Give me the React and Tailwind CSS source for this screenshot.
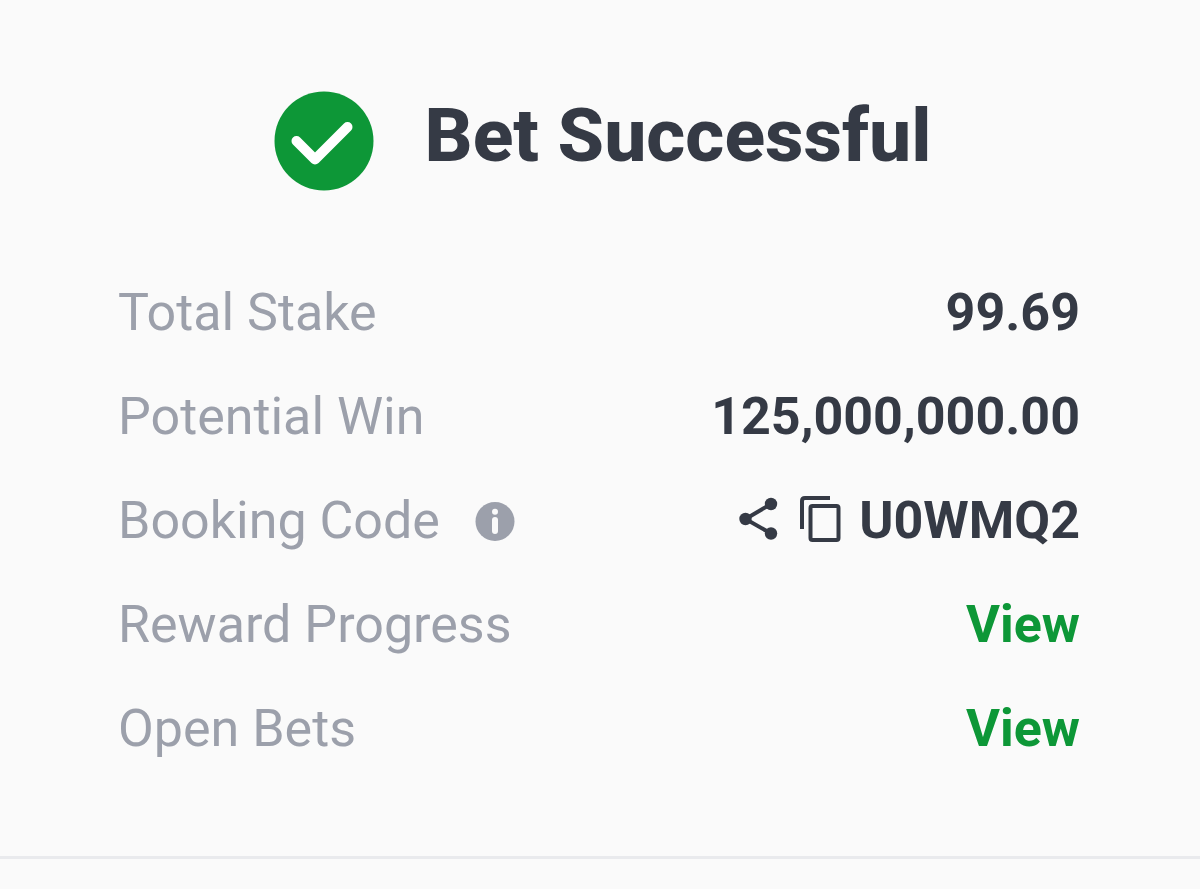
import React from 'react';

const SuccessIcon = () => (
  <svg className="w-[100px] h-[100px] shrink-0" viewBox="0 0 100 100" aria-hidden="true">
    <circle cx="50" cy="50" r="49.5" fill="#0d9737" />
    <path d="M22.5 50 L41 68.5 L73.5 36" fill="none" stroke="#fff" strokeWidth="10" strokeLinecap="round" strokeLinejoin="round" />
  </svg>
);

const InfoIcon = () => (
  <svg className="w-10 h-10" viewBox="0 0 40 40" aria-hidden="true">
    <circle cx="20" cy="20.5" r="19.5" fill="#9ca0ab" />
    <circle cx="20" cy="10.7" r="3" fill="#fafafa" />
    <rect x="17" y="16" width="6" height="17" rx="3" fill="#fafafa" />
  </svg>
);

const ShareIcon = () => (
  <svg className="w-10 h-[52px]" viewBox="0 0 40 52" aria-hidden="true">
    <path d="M32 9 L6.5 24 L32 38.5" fill="none" stroke="#353a45" strokeWidth="4" />
    <circle cx="32" cy="9" r="6.2" fill="#353a45" />
    <circle cx="6.5" cy="24" r="6.2" fill="#353a45" />
    <circle cx="32" cy="38.5" r="6.2" fill="#353a45" />
  </svg>
);

const CopyIcon = () => (
  <svg className="w-11 h-[52px]" viewBox="0 0 44 52" aria-hidden="true">
    <path d="M3 34V6q0-3 3-3H31" fill="none" stroke="#353a45" strokeWidth="4" />
    <rect x="11.5" y="11" width="28" height="34" rx="2" fill="none" stroke="#353a45" strokeWidth="4" />
  </svg>
);

const Row = ({ label, hint, children }) => (
  <div className="flex items-center justify-between h-[104px]">
    <dt className="flex items-center gap-[35px] text-[#9ca0ab]">
      {label}
      {hint}
    </dt>
    <dd className="flex items-center font-bold text-[#353a45]">{children}</dd>
  </div>
);

const App = () => (
  <main className="min-h-screen bg-[#fafafa] font-['Roboto',sans-serif] flex flex-col">
    <header className="flex items-start justify-center gap-[50px] pt-[91px] pl-1.5">
      <SuccessIcon />
      <h1 className="text-[75px] leading-[88px] font-extrabold text-[#353a45]">Bet Successful</h1>
    </header>

    <dl className="pl-[118px] pr-[120px] pt-[70px] text-[52px] leading-[60px]">
      <Row label="Total Stake">99.69</Row>
      <Row label="Potential Win">125,000,000.00</Row>
      <Row
        label="Booking Code"
        hint={<button type="button" aria-label="About booking codes"><InfoIcon /></button>}
      >
        <button type="button" aria-label="Share" className="mr-5"><ShareIcon /></button>
        <button type="button" aria-label="Copy code" className="mr-4"><CopyIcon /></button>
        U0WMQ2
      </Row>
      <Row label="Reward Progress">
        <a href="#rewards" className="text-[#0d9737]">View</a>
      </Row>
      <Row label="Open Bets">
        <a href="#bets" className="text-[#0d9737]">View</a>
      </Row>
    </dl>

    <hr className="mt-[75px] border-t-[3px] border-[#e9eaed]" />
  </main>
);

export default App;
